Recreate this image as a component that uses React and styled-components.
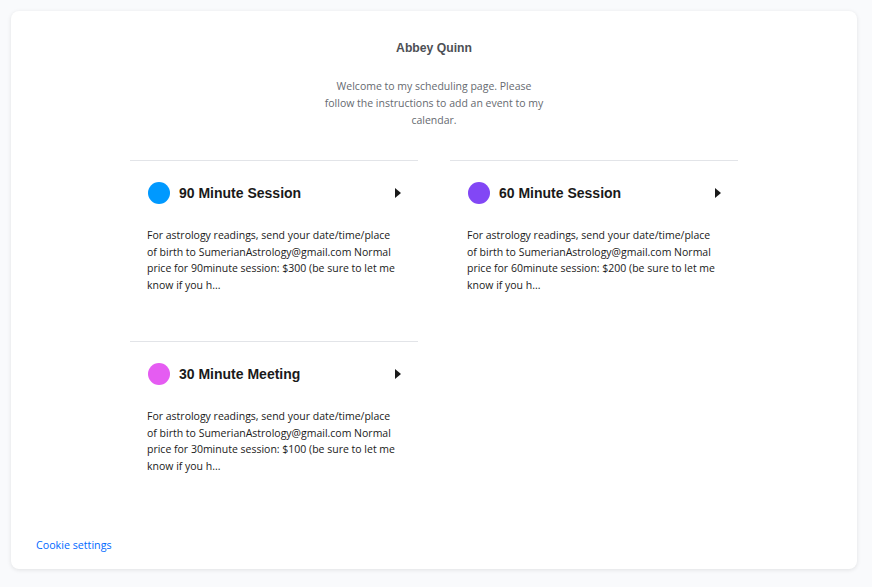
import React from "react";
import styled, { createGlobalStyle } from "styled-components";

const GlobalStyle = createGlobalStyle`
  html, body {
    margin: 0;
    padding: 0;
    background: #f9fafc;
    font-family: "Liberation Sans", Arial, sans-serif;
  }
`;

const Page = styled.div`
  padding: 11px 15px 18px 11px;
`;

const Card = styled.div`
  width: 846px;
  height: 558px;
  box-sizing: border-box;
  background: #ffffff;
  border-radius: 8px;
  box-shadow: 0 1px 4px rgba(0, 0, 0, 0.1);
  display: flex;
  flex-direction: column;
  align-items: center;
  padding: 29px 0 17px;
`;

const Name = styled.h1`
  margin: 0;
  font-size: 12.2px;
  line-height: 16px;
  font-weight: 700;
  color: #4d5055;
`;

const Welcome = styled.p`
  margin: 22px 0 0;
  width: 226px;
  text-align: center;
  font-family: "Open Sans", sans-serif;
  font-size: 10.5px;
  line-height: 17px;
  color: #666a70;
`;

const Grid = styled.div`
  margin-top: 31px;
  display: grid;
  grid-template-columns: 288px 288px;
  column-gap: 32px;
`;

const Event = styled.div`
  border-top: 1px solid #e2e4e8;
  padding: 21px 17px 47px 18px;
  min-height: 112px;
`;

const Header = styled.div`
  display: flex;
  align-items: center;
  height: 22px;
`;

const Dot = styled.span`
  width: 22px;
  height: 22px;
  border-radius: 50%;
  background: ${(p) => p.color};
  flex-shrink: 0;
`;

const Title = styled.h2`
  margin: 0 0 0 9px;
  flex: 1;
  font-size: 14px;
  font-weight: 700;
  color: #1a1a1a;
`;

const Arrow = styled.span`
  width: 0;
  height: 0;
  border-top: 5px solid transparent;
  border-bottom: 5px solid transparent;
  border-left: 6px solid #1a1a1a;
`;

const Desc = styled.p`
  margin: 23px 0 0 -1px;
  font-family: "Open Sans", sans-serif;
  font-size: 10.5px;
  line-height: 16.6px;
  color: #1a1a1a;
`;

const Cookie = styled.a`
  margin-top: auto;
  align-self: flex-start;
  margin-left: 25px;
  font-family: "Open Sans", sans-serif;
  font-size: 10.7px;
  line-height: 14px;
  color: #0069ff;
  text-decoration: none;
`;

const events = [
  { title: "90 Minute Session", color: "#0099ff", mins: 90, price: 300 },
  { title: "60 Minute Session", color: "#8247f5", mins: 60, price: 200 },
  { title: "30 Minute Meeting", color: "#e55cf2", mins: 30, price: 100 },
];

const describe = (e) =>
  `For astrology readings, send your date/time/place of birth to SumerianAstrology@gmail.com Normal price for ${e.mins}minute session: $${e.price} (be sure to let me know if you h...`;

export default function App() {
  return (
    <>
      <GlobalStyle />
      <Page>
        <Card>
          <Name>Abbey Quinn</Name>
          <Welcome>
            Welcome to my scheduling page. Please follow the instructions to add
            an event to my calendar.
          </Welcome>
          <Grid>
            {events.map((e) => (
              <Event key={e.title}>
                <Header>
                  <Dot color={e.color} />
                  <Title>{e.title}</Title>
                  <Arrow />
                </Header>
                <Desc>{describe(e)}</Desc>
              </Event>
            ))}
          </Grid>
          <Cookie href="#">Cookie settings</Cookie>
        </Card>
      </Page>
    </>
  );
}
